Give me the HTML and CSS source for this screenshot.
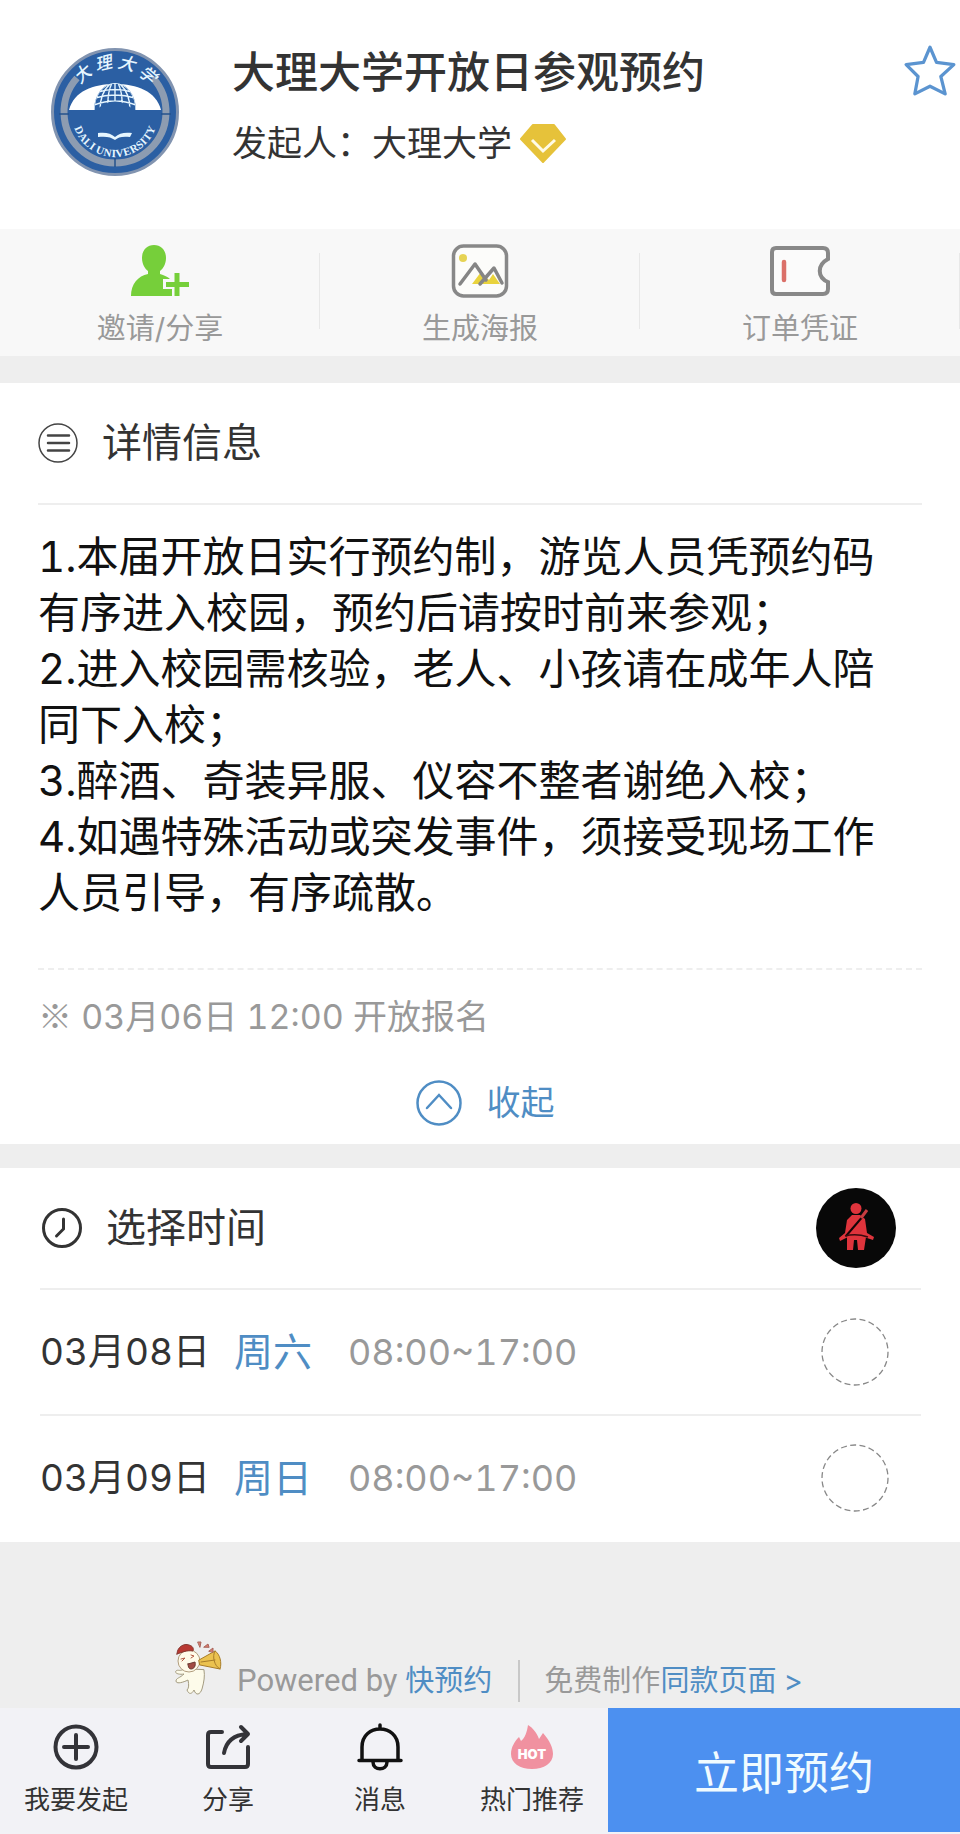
FILE: index.html
```html
<!DOCTYPE html>
<html lang="zh-CN">
<head>
<meta charset="utf-8">
<meta name="viewport" content="width=device-width, initial-scale=1">
<title>大理大学开放日参观预约</title>
<link rel="stylesheet" href="styles.css">
</head>
<body>
<header class="hero">
  <svg class="seal" viewBox="0 0 128 128" role="img" aria-label="大理大学校徽">
    <defs>
      <path id="arc-top" d="M23 50A43 43 0 0 1 105 50"/>
      <path id="arc-bottom" d="M24 66A40 40 0 0 0 104 66"/>
      <clipPath id="dome"><path d="M43 62a21 27 0 0 1 42 0z"/></clipPath>
    </defs>
    <circle cx="64" cy="64" r="62.500" fill="#2b5fa3" stroke="#8294b0" stroke-width="3"/>
    <path d="M26 30A51 51 0 1 0 102 30" fill="none" stroke="#8d9cb1" stroke-width="7"/>
    <path d="M8 66h10M110 66h10M64 110v9" stroke="#24518c" stroke-width="1.500"/>
    <path d="M18 62C23 43 42 36 64 36s41 7 46 26z" fill="#fff"/>
    <path d="M43 62a21 27 0 0 1 42 0z" fill="#2b5fa3"/>
    <g clip-path="url(#dome)" fill="none" stroke="#e6f6ff" stroke-width="1.400">
      <path d="M43 62a21 27 0 0 1 42 0M49 62q0-17 10-26M57 62q-1-17 4-27M64 62V34M71 62q1-17-4-27M79 62q0-17-10-26M47 44q17-5 34 0M44 50q20-6 40 0M43 57q21-8 42 0"/>
    </g>
    <path d="M45 62q19-17 38 0z" fill="#2b5fa3"/>
    <path d="M47 85c7-1 13 0 17 4 4-4 10-5 17-4l-2 4c-7-1-12 0-15 3-4-3-9-4-17-3z" fill="#e6f6ff"/>
    <text class="seal-name"><textPath href="#arc-top" startOffset="50%">大 理 大 学</textPath></text>
    <text class="seal-latin"><textPath href="#arc-bottom" startOffset="50%">DALI UNIVERSITY</textPath></text>
  </svg>
  <div class="hero-text">
    <h1 class="hero-title">大理大学开放日参观预约</h1>
    <p class="host">发起人：大理大学
      <svg class="host-badge" viewBox="0 0 46 39" aria-hidden="true"><path d="M13 1h21l11 14-22 23L1 15z" fill="#e6c23a" stroke="#e6c23a" stroke-width="2" stroke-linejoin="round"/><path d="M12 16l11 11 12-11" fill="none" stroke="#fffbe6" stroke-width="3"/></svg>
    </p>
  </div>
  <button class="favorite" type="button" aria-label="收藏">
    <svg viewBox="0 0 48 48" aria-hidden="true"><path d="M24 3l6 14 16 2-12 11 4 16-14-7-14 7 3-16L2 19l16-2z" fill="none" stroke="#5b94d0" stroke-width="3" stroke-linejoin="round"/></svg>
  </button>
</header>

<nav class="tools">
  <button class="tool" type="button">
    <svg class="tool-icon" viewBox="0 0 60 56" aria-hidden="true"><path d="M24 2c7 0 12 5 12 13 0 6-3 11-6 13v3c4 1 8 3 10 5h-7v10h9v7H1C1 41 8 33 18 31v-3c-3-2-6-7-6-13C12 7 17 2 24 2z" fill="#76cf3a"/><path d="M47 30v23M36 41.500h23" stroke="#76cf3a" stroke-width="5"/></svg>
    <span>邀请/分享</span>
  </button>
  <button class="tool" type="button">
    <svg class="tool-icon" viewBox="0 0 60 56" aria-hidden="true"><rect x="3.500" y="3" width="53" height="50" rx="10" fill="#fcfcfa" stroke="#888" stroke-width="3.500"/><circle cx="13" cy="15" r="4" fill="#e6d354"/><path d="M22 41l9-12 8 8 4-6 7 10z" fill="#e9d33c"/><path d="M10 41l15-20 11 16M30 41l14-16 8 15" fill="none" stroke="#858585" stroke-width="3.500" stroke-linecap="round" stroke-linejoin="round"/></svg>
    <span>生成海报</span>
  </button>
  <button class="tool" type="button">
    <svg class="tool-icon" viewBox="0 0 60 56" aria-hidden="true"><path d="M6 5h47q5 0 5 5v6c-11 6-11 18 0 23v7q0 5-5 5H6q-4 0-4-4V9q0-4 4-4z" fill="#fbfbfb" stroke="#888" stroke-width="4"/><path d="M14 19v18" stroke="#db7069" stroke-width="4.500" stroke-linecap="round"/></svg>
    <span>订单凭证</span>
  </button>
</nav>

<main class="content">
  <section class="panel panel-details">
    <h2 class="panel-head">
      <svg class="panel-icon" viewBox="0 0 40 40" fill="none" stroke="#444" aria-hidden="true"><circle cx="20" cy="20" r="19" stroke-width="1.500"/><path d="M10 12.500h21M10 20h21M10 27.500h21" stroke-width="2.500" stroke-linecap="round"/></svg>
      详情信息
    </h2>
    <ol class="rules">
      <li>1.本届开放日实行预约制，游览人员凭预约码有序进入校园，预约后请按时前来参观；</li>
      <li>2.进入校园需核验，老人、小孩请在成年人陪同下入校；</li>
      <li>3.醉酒、奇装异服、仪容不整者谢绝入校；</li>
      <li>4.如遇特殊活动或突发事件，须接受现场工作人员引导，有序疏散。</li>
    </ol>
    <p class="note"><span class="note-mark">※</span> 03月06日 12:00 开放报名</p>
    <button class="collapse" type="button">
      <svg class="collapse-icon" viewBox="0 0 46 46" fill="none" stroke="#4f8dc4" aria-hidden="true"><circle cx="23" cy="23" r="21.500" stroke-width="2.500"/><path d="M11 28l12-13 12 13" stroke-width="2.500" stroke-linecap="round"/></svg>
      收起
    </button>
  </section>

  <section class="panel panel-times">
    <h2 class="panel-head">
      <svg class="panel-icon" viewBox="0 0 40 40" fill="none" stroke="#333" stroke-linecap="round" aria-hidden="true"><circle cx="20" cy="20" r="18.500" stroke-width="3"/><path d="M21.500 11v10l-7 7" stroke-width="3"/></svg>
      选择时间
      <svg class="belt" viewBox="0 0 80 80" aria-hidden="true"><circle cx="40" cy="40" r="40" fill="#080808"/><g fill="#df343c"><circle cx="40" cy="20.500" r="5.500"/><path d="M36 27h8l5 4 2 14 7 4-1 3-9-3H32l-8 4-1-3 6-5 2-13z"/><path d="M31 49h19l-2 13h-6l-1-10h-3l-1 10h-6z"/></g><path d="M30 48l18-21" stroke="#130507" stroke-width="2"/><path d="M45 30l6-8" stroke="#c83b40" stroke-width="3"/><path d="M29 48q11-3 23 1" fill="none" stroke="#390b0e" stroke-width="1.500"/></svg>
    </h2>
    <label class="slot">
      <span class="slot-date">03月08日</span>
      <span class="slot-day">周六</span>
      <span class="slot-hours">08:00~17:00</span>
      <span class="pick">
        <input class="pick-input" type="radio" name="slot" value="0308">
        <svg class="pick-ring" viewBox="0 0 68 68" aria-hidden="true"><circle cx="34" cy="34" r="33"/></svg>
      </span>
    </label>
    <label class="slot">
      <span class="slot-date">03月09日</span>
      <span class="slot-day">周日</span>
      <span class="slot-hours">08:00~17:00</span>
      <span class="pick">
        <input class="pick-input" type="radio" name="slot" value="0309">
        <svg class="pick-ring" viewBox="0 0 68 68" aria-hidden="true"><circle cx="34" cy="34" r="33"/></svg>
      </span>
    </label>
  </section>
</main>

<footer class="credit">
  <svg class="mascot" viewBox="0 0 48 56" stroke-linecap="round" stroke-linejoin="round" aria-hidden="true">
    <path d="M9 29C5 32 3 29 1 31s3 4 8 3c-4 4-8 4-8 7s6 2 12-1c1 5 1 8-1 10 2 5 5 4 7 0 2 6 6 5 8-1 2-7 3-13 2-19z" fill="#fdfbea" stroke="#a39b80" stroke-width="1"/>
    <circle cx="14" cy="21" r="11" fill="#fffbea" stroke="#b09c7d" stroke-width="1"/>
    <path d="M2 14C2 7 9 3 14 5c4 1 5 4 4 6-6-1-10 1-16 3z" fill="#b83832" stroke="#853830" stroke-width="1"/>
    <path d="M6 19l4-1-3 3M16 15l3 1-3 2" fill="none" stroke="#b45b45" stroke-width="1"/>
    <path d="M13 24l7-2c1 4-1 7-4 7-2 0-3-2-3-5z" fill="#a24b43" stroke="#6d3b33" stroke-width="1"/>
    <path d="M24 20l16-9c5 3 7 12 5 18l-20-4z" fill="#ebc24f" stroke="#a87d29" stroke-width="1"/>
    <path d="M40 11c-3 5-1 15 5 18M26 22l14-2" fill="none" stroke="#a87d29" stroke-width="1"/>
    <path d="M23 2h3l-1 5zM29 7l4-3 1 3zM34 11l4-3v4z" fill="#d87b6c" stroke="#a9655b" stroke-width="1"/>
  </svg>
  <p class="powered"><span class="powered-by">Powered by</span> <a class="link" href="#">快预约</a></p>
  <p class="make">免费制作<a class="link" href="#">同款页面 &gt;</a></p>
</footer>

<nav class="bottom">
  <div class="tabs">
    <button class="tab" type="button">
      <svg class="tab-icon" viewBox="0 0 48 48" fill="none" stroke="#333338" stroke-width="4" stroke-linecap="round" aria-hidden="true"><circle cx="24" cy="24" r="20.500"/><path d="M24 12v24M12 24h24"/></svg>
      我要发起
    </button>
    <button class="tab" type="button">
      <svg class="tab-icon" viewBox="0 0 48 48" fill="none" stroke="#333338" stroke-width="4" stroke-linecap="round" stroke-linejoin="round" aria-hidden="true"><path d="M18 9H7q-3 0-3 3v29q0 3 3 3h34q3 0 3-3V24M20 30C22 19 29 12 43 11M37 4l7 7-7 7"/></svg>
      分享
    </button>
    <button class="tab" type="button">
      <svg class="tab-icon" viewBox="0 0 48 48" fill="none" stroke="#111" stroke-width="3.500" stroke-linecap="round" aria-hidden="true"><path d="M24 2v4M6 37V24C6 0 42 0 42 24v13M3 37.500h42M17 39c0 9 14 9 14 0"/></svg>
      消息
    </button>
    <button class="tab" type="button">
      <svg class="tab-icon" viewBox="0 0 48 48" aria-hidden="true"><path d="M20 2c5 3 9 8 11 14l4-6c7 8 10 15 10 21 0 9-9 15-21 15S3 40 3 31c0-7 4-13 8-17l2 4c4-3 6-9 7-16z" fill="#f091a0"/><text class="hot" x="24" y="36">HOT</text></svg>
      热门推荐
    </button>
  </div>
  <button class="reserve" type="button">立即预约</button>
</nav>
</body>
</html>
```
FILE: styles.css
```css
* { box-sizing: border-box; }

body {
  margin: 0;
  background: #eee;
  color: #333;
  font-family: Inter, "Noto Sans CJK SC", sans-serif;
  font-variant-numeric: tabular-nums;
}

h1, h2, p, ol { margin: 0; padding: 0; font-weight: 400; }
ol { list-style: none; }
svg { display: block; flex: none; }
a { text-decoration: none; }

button {
  margin: 0;
  padding: 0;
  border: 0;
  background: none;
  color: inherit;
  font: inherit;
  cursor: pointer;
}

.hero {
  display: flex;
  align-items: flex-start;
  min-height: 229px;
  padding: 44px 4px 0 51px;
  background: #fff;
}
.seal { width: 128px; height: 128px; margin-top: 4px; }
.seal-name {
  fill: #e6f6ff;
  font: italic 500 17px "Noto Sans CJK SC", sans-serif;
  text-anchor: middle;
}
.seal-latin {
  fill: #e6f6ff;
  font: 700 11px "Liberation Serif", serif;
  text-anchor: middle;
  dominant-baseline: middle;
}
.hero-text { flex: 1; padding-left: 53px; }
.hero-title { font-size: 43px; line-height: 56px; font-weight: 500; }
.host {
  display: flex;
  align-items: center;
  gap: 8px;
  margin-top: 18px;
  font-size: 35px;
  line-height: 50px;
}
.host-badge { width: 46px; height: 39px; }
.favorite svg { width: 52px; height: 52px; }

.tools {
  display: grid;
  grid-template-columns: repeat(3, 1fr);
  min-height: 127px;
  padding: 14px 0 6px;
  background: #f8f8f8;
}
.tool {
  display: flex;
  flex-direction: column;
  align-items: center;
  gap: 9px;
  color: #999;
  font-size: 29px;
  line-height: 42px;
  background: linear-gradient(#e8e8e8, #e8e8e8) right 10px / 1px 76px no-repeat;
}
.tool-icon { width: 60px; height: 56px; }

.content { display: grid; gap: 24px; padding-top: 27px; }
.panel { background: #fff; }
.panel-details { padding: 0 38px 2px; }
.panel-times { padding: 0 39px 0 40px; }
.panel-head {
  display: flex;
  align-items: center;
  gap: 24px;
  min-height: 122px;
  border-bottom: 2px solid #eee;
  font-size: 40px;
  line-height: 56px;
}
.panel-icon { width: 40px; height: 40px; }
.panel-times .panel-icon { margin-left: 2px; }
.belt { width: 80px; height: 80px; margin: 0 25px 0 auto; }

.rules {
  padding: 24px 36px 47px 0;
  border-bottom: 2px dashed #eee;
  color: #111;
  font-size: 42px;
  line-height: 56px;
}
.note { color: #999; font-size: 34px; line-height: 94px; }
.note-mark { font-family: "Noto Sans CJK SC", sans-serif; line-height: 1; }
.collapse {
  display: flex;
  align-items: center;
  justify-content: center;
  gap: 25px;
  width: 100%;
  padding-left: 10px;
  color: #4f8dc4;
  font-size: 34px;
  line-height: 78px;
}
.collapse-icon { width: 46px; height: 46px; }

.slot {
  display: flex;
  align-items: center;
  min-height: 126px;
  border-bottom: 2px solid #eee;
  font-size: 37px;
  line-height: 56px;
  cursor: pointer;
}
.slot:last-child { border-bottom-color: #fff; }
.slot-day { margin-left: 24px; color: #4f8dc4; font-size: 39px; }
.slot-hours { margin-left: 36px; color: #999; font-size: 36px; }
.pick { display: grid; margin: 0 32px 0 auto; }
.pick-input, .pick-ring { grid-area: 1 / 1; width: 68px; height: 68px; }
.pick-input { margin: 0; opacity: 0; }
.pick-ring { fill: none; stroke: #888; stroke-width: 1.3; stroke-dasharray: 6 3.4; }
.pick-input:checked + .pick-ring { fill: #4c90f0; }

.credit {
  display: flex;
  align-items: flex-end;
  justify-content: center;
  min-height: 166px;
  padding: 0 0 6px 18px;
  color: #999;
  font-size: 29px;
  line-height: 42px;
  font-weight: 300;
}
.mascot { width: 48px; height: 56px; margin: 0 14px 6px 0; }
.powered { padding-right: 26px; border-right: 2px solid #c8c8c8; }
.powered-by { font-family: Roboto, sans-serif; font-size: 31px; }
.make { padding-left: 24px; }
.link { color: #4f8dc4; }

.bottom { display: flex; align-items: flex-start; min-height: 126px; background: #f2f2f6; }
.tabs { display: grid; grid-template-columns: repeat(4, 1fr); flex: 19; }
.tab {
  display: flex;
  flex-direction: column;
  align-items: center;
  gap: 10px;
  padding-top: 15px;
  font-size: 26px;
  line-height: 38px;
}
.tab-icon { width: 48px; height: 48px; }
.hot { fill: #fff; font: 900 13px Inter, sans-serif; text-anchor: middle; }
.reserve {
  flex: 11;
  min-height: 124px;
  background: #4c90f0;
  color: #f0fbff;
  font-size: 45px;
}
```
